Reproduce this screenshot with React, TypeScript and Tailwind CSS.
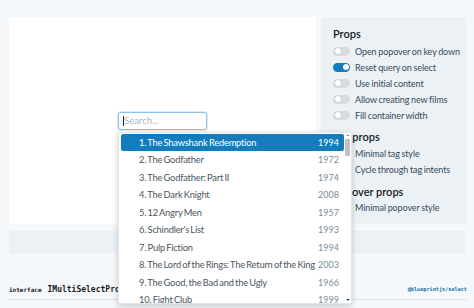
import React from "react";

const films: [string, string][] = [
  ["1. The Shawshank Redemption", "1994"],
  ["2. The Godfather", "1972"],
  ["3. The Godfather: Part II", "1974"],
  ["4. The Dark Knight", "2008"],
  ["5. 12 Angry Men", "1957"],
  ["6. Schindler's List", "1993"],
  ["7. Pulp Fiction", "1994"],
  ["8. The Lord of the Rings: The Return of the King", "2003"],
  ["9. The Good, the Bad and the Ugly", "1966"],
  ["10. Fight Club", "1999"],
  ["11. Forrest Gump", "1994"],
];

function Switch({ on }: { on?: boolean }) {
  return (
    <div
      className={
        on
          ? "shrink-0 w-[17px] h-[9px] rounded-full bg-[#137cbd] flex items-center justify-end px-[1.5px]"
          : "shrink-0 w-[17px] h-[9px] rounded-full bg-[#d5dce2] flex items-center justify-start px-[1.5px]"
      }
    >
      <div className="w-[6px] h-[6px] rounded-full bg-white shadow-[0_0_1px_rgba(0,0,0,0.3)]" />
    </div>
  );
}

function Row({ label, on }: { label: string; on?: boolean }) {
  return (
    <div className="flex items-center gap-[5px] h-[16px]">
      <Switch on={on} />
      <span className="text-[9px] text-[#394b59] leading-none whitespace-nowrap tracking-[-0.1px] [word-spacing:-0.5px]">{label}</span>
    </div>
  );
}

export default function App() {
  return (
    <div
      className="w-[474px] h-[308px] bg-[#f5f8fa] overflow-hidden flex flex-col"
      style={{ fontFamily: "Lato, 'Open Sans', sans-serif" }}
    >
      <div className="flex gap-[5px] pt-[17px] pl-[9px] pr-[8px] h-[224px]">
        <div className="relative flex-1 bg-white flex items-center justify-center">
          <div className="relative">
            <div className="w-[89px] h-[18px] rounded-[3px] border border-[#8fc0e6] shadow-[0_0_0_1px_rgba(19,124,189,0.15)] bg-white flex items-center pl-[4px]">
              <span className="w-px h-[10px] bg-[#182026]" />
              <span className="text-[9.5px] text-[#a7b6c2] leading-none">Search...</span>
            </div>
            <div className="absolute left-0 top-[20px] w-[234px] h-[172px] bg-white border border-[#e1e5e9] shadow-[0_2px_6px_rgba(16,22,26,0.2)] flex z-10 overflow-hidden">
              <div className="flex-1 min-w-0 flex flex-col pt-[1px] pl-[2px]">
                {films.map(([t, y], i) => (
                  <div
                    key={t}
                    className={
                      i === 0
                        ? "h-[17.5px] shrink-0 flex items-center justify-between pl-[18px] pr-[5px] bg-[#137cbd] rounded-[2px] text-white"
                        : "h-[17.5px] shrink-0 flex items-center justify-between pl-[18px] pr-[5px] text-[#4a5660]"
                    }
                  >
                    <span className="text-[9.3px] leading-none whitespace-nowrap tracking-[-0.2px] [word-spacing:-0.8px]">{t}</span>
                    <span
                      className={
                        i === 0
                          ? "text-[9px] leading-none text-white"
                          : "text-[9px] leading-none text-[#7d8c97]"
                      }
                    >
                      {y}
                    </span>
                  </div>
                ))}
              </div>
              <div className="w-[7px] shrink-0 flex flex-col items-center pt-[1px] pb-[1px]">
                <div className="w-0 h-0 border-l-[2px] border-r-[2px] border-b-[2px] border-l-transparent border-r-transparent border-b-[#a0a0a0]" />
                <div className="mt-[3px] w-[5px] h-[17px] bg-[#c1c1c1] rounded-[1px]" />
                <div className="flex-1" />
                <div className="mb-[1px] w-0 h-0 border-l-[2px] border-r-[2px] border-t-[2px] border-l-transparent border-r-transparent border-t-[#505050]" />
              </div>
            </div>
          </div>
        </div>
        <div className="w-[145px] bg-[#ebf1f5] pl-[12px] pt-[11px] flex flex-col">
          <div className="text-[11px] font-semibold text-[#182026] leading-none mb-[4px]">Props</div>
          <Row label="Open popover on key down" />
          <Row label="Reset query on select" on />
          <Row label="Use initial content" />
          <Row label="Allow creating new films" />
          <Row label="Fill container width" />
          <div className="text-[11px] font-semibold text-[#182026] leading-none mt-[8px] mb-[3px]">Tag props</div>
          <Row label="Minimal tag style" />
          <Row label="Cycle through tag intents" />
          <div className="text-[11px] font-semibold text-[#182026] leading-none mt-[9px] mb-[2px]">Popover props</div>
          <Row label="Minimal popover style" />
        </div>
      </div>
      <div className="mt-[7px] mx-[9px] h-[22px] bg-[#ebf1f5]" />
      <div className="ml-[9px] mr-[7px] mt-[28px] h-[19px] flex items-center justify-between border-b border-[#dde3e8]">
        <div className="flex items-baseline gap-[6px]" style={{ fontFamily: "'DejaVu Sans Mono', monospace" }}>
          <span className="text-[6px] font-bold text-[#182026]">interface</span>
          <span className="text-[8px] font-bold text-[#182026]">IMultiSelectProps</span>
        </div>
        <span className="text-[5.2px] font-bold text-[#106ba3]" style={{ fontFamily: "'DejaVu Sans Mono', monospace" }}>
          @blueprintjs/select
        </span>
      </div>
    </div>
  );
}
